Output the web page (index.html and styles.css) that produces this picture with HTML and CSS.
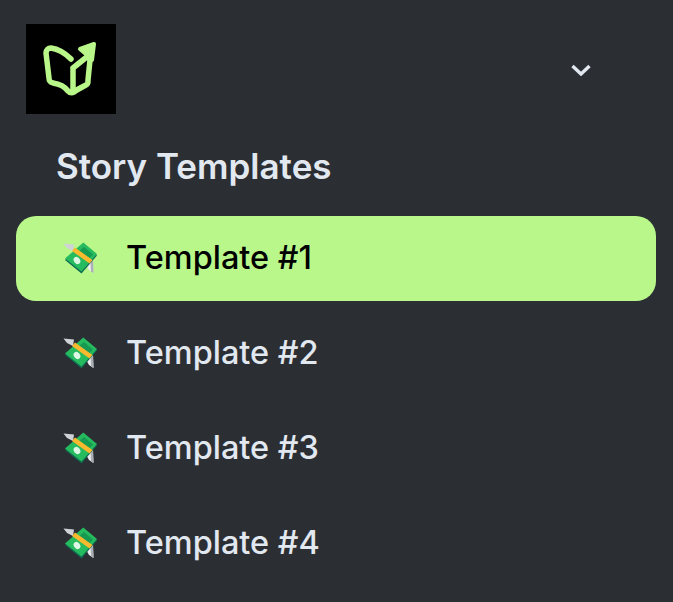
FILE: index.html
```html
<!DOCTYPE html>
<html lang="en">
<head>
    <meta charset="UTF-8">
    <meta name="viewport" content="width=device-width, initial-scale=1.0">
    <title>Story Templates</title>
    <link rel="stylesheet" href="styles.css">
</head>
<body>
    <svg class="sprite" width="0" height="0">
        <symbol id="money" viewBox="0 0 36 36">
            <!-- wings -->
            <path d="M1.500 3.500 L12 4.500 L11 11 L5 8 Z" fill="#cfd3d6"/>
            <path d="M23 23 L31 20 L31.500 33 L27 30 Z" fill="#eceef0"/>
            <path d="M28.500 21 L31 20 L31.500 33 L29 31.500 Z" fill="#a9afb4"/>
            <!-- bills -->
            <path d="M3 20 L21 4 L35 15.500 L19.500 33.500 Z" fill="#0d6b52"/>
            <path d="M3 18.500 L21.300 2.500 L35 14 L19.500 31.500 Z" fill="#26bb5e"/>
            <path d="M22 7 L31 14.500 L26 19.500 L16.500 11.500 Z" fill="#169a52"/>
            <ellipse cx="15" cy="20.500" rx="3" ry="3.800" transform="rotate(-40 15 20.500)" fill="#dcf7e3"/>
            <path d="M13 7.500 L30.500 20 L27.500 23.500 L10 11 Z" fill="#f9b92e"/>
        </symbol>
    </svg>

    <aside class="sidebar">
        <div class="top-row">
            <div class="logo">
                <svg viewBox="0 0 90 90" width="90" height="90">
                    <path d="M45 35 C38 28 32 25 25 24 C22 24 20 26 20 29 L23 54 C23 57 24 58 27 59 C34 60 39 63 42 67 C44 69 46 69 48 68 C52 65 56 63 60 61 C62 60 62 59 62 56 L64 36 M47 44 L47 67 M47 44 L62 32" fill="none" stroke="#b9f78a" stroke-width="5.500" stroke-linecap="round" stroke-linejoin="round"/>
                    <path d="M54 25 L68 20 L66 36 L61 31 Z" fill="#b9f78a" stroke="#b9f78a" stroke-width="4" stroke-linejoin="round"/>
                </svg>
            </div>
            <svg class="chevron" viewBox="0 0 20 12" width="20" height="12">
                <path d="M1.500 2 L10 10 L18.500 2" fill="none" stroke="#e2e8f0" stroke-width="3.400"/>
            </svg>
        </div>

        <h2 class="title">Story Templates</h2>

        <ul class="menu">
            <li class="menu-item active"><svg class="emoji"><use href="#money"/></svg>Template #1</li>
            <li class="menu-item"><svg class="emoji"><use href="#money"/></svg>Template #2</li>
            <li class="menu-item"><svg class="emoji"><use href="#money"/></svg>Template #3</li>
            <li class="menu-item"><svg class="emoji"><use href="#money"/></svg>Template #4</li>
        </ul>
    </aside>
</body>
</html>
```

FILE: styles.css
```css
html, body {
    height: 100%;
}

body {
    margin: 0;
    background-color: #2b2e33;
    font-family: Inter, "Liberation Sans", sans-serif;
    color: #e2e8f0;
    overflow: hidden;
}

.sprite {
    position: absolute;
}

.sidebar {
    width: 640px;
    padding: 24px 17px 0 16px;
}

.top-row {
    display: flex;
    justify-content: space-between;
    align-items: center;
    padding: 0 65px 0 10px;
}

.logo {
    width: 90px;
    height: 90px;
    background-color: #000;
}

.logo svg {
    display: block;
}

.chevron {
    margin-top: 1px;
}

.title {
    margin: 28px 0 0 40px;
    font-size: 35px;
    line-height: 48px;
    font-weight: 600;
}

.menu {
    list-style: none;
    margin: 26px 0 0;
    padding: 0;
    display: flex;
    flex-direction: column;
    gap: 10px;
}

.menu-item {
    display: flex;
    align-items: center;
    height: 83px;
    padding: 0 0 2px 46px;
    border-radius: 20px;
    font-size: 32.500px;
    font-weight: 500;
}

.menu-item.active {
    background-color: #b9f78a;
    color: #000;
}

.emoji {
    width: 36px;
    height: 36px;
    margin-right: 28px;
    flex-shrink: 0;
}
```
